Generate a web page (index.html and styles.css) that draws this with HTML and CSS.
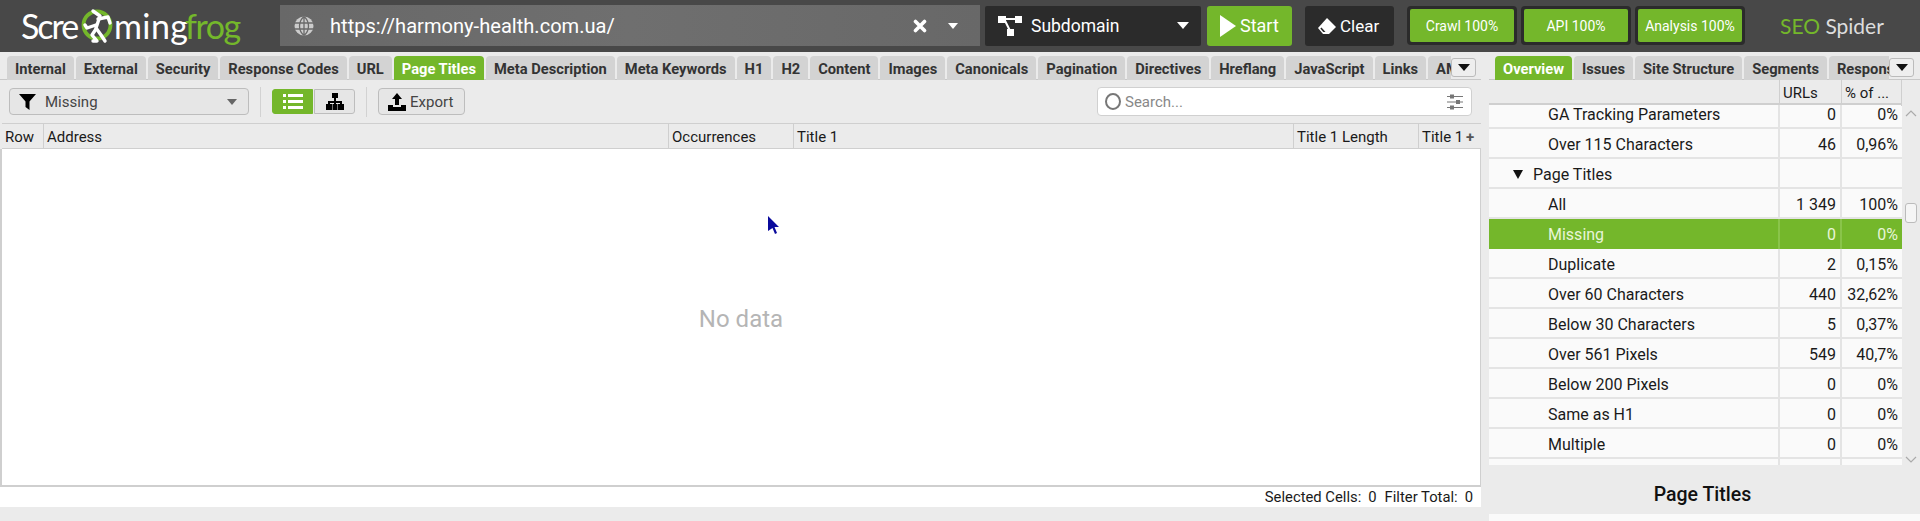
FILE: index.html
```html
<!doctype html>
<html lang="en">
  <head>
    <meta charset="UTF-8" />
    <title>Screaming Frog SEO Spider</title>
    <link rel="stylesheet" href="styles.css">
  </head>
  <body>
    <header class="topbar">
      <div class="logo">
        <span class="logo-scre">Scre</span>
        <svg class="logo-frog" width="36" height="36" viewBox="0 0 36 36">
          <circle cx="18" cy="17" r="13.500" fill="none" stroke="#74b72b" stroke-width="3.800" />
          <g fill="none" stroke="#fff" stroke-width="3.400" stroke-linejoin="round" stroke-linecap="round">
            <path d="M14 3l7 5-4 12 5 7 4 6" />
            <path d="M19 11l10-2 2 6" />
            <path d="M17 17l-9 3-2-3" />
            <path d="M17 21l-4 6 5 6h-4" />
          </g>
        </svg>
        <span class="logo-ming">ming</span><span class="logo-green">frog</span>
      </div>
      <div class="url-box">
        <svg width="20" height="20" viewBox="0 0 20 20" fill="none">
          <circle cx="10" cy="10" r="9.500" fill="#ccc" />
          <path stroke="#6a6a6a" stroke-width="1.300" d="M1 7h18M1 13h18M10 .5v19M10 .5c-6 5-6 14 0 19M10 .5c6 5 6 14 0 19" />
        </svg>
        <span class="url-text">https://harmony-health.com.ua/</span>
        <svg class="url-x" width="14" height="14" viewBox="0 0 14 14">
          <path d="M2.500 2.500l9 9M11.500 2.500l-9 9" stroke="#fff" stroke-width="3.600" stroke-linecap="round" />
        </svg>
        <span class="caret caret-url"></span>
      </div>
      <div class="mode-box">
        <svg width="24" height="22" viewBox="0 0 24 22" fill="#fff">
          <rect x="0" y="1" width="8" height="7" />
          <rect x="17" y="1" width="7" height="7" />
          <rect x="9" y="14" width="7" height="7" />
          <path d="M6 3h12v2H6zM6 6l1.800-1 5 10-1.800 1z" />
        </svg>
        <span class="mode-text">Subdomain</span>
        <span class="caret"></span>
      </div>
      <div class="start-btn"><span class="play"></span>Start</div>
      <div class="clear-btn">
        <svg width="20" height="18" viewBox="0 0 20 18">
          <path fill="#fff" d="M10 1l9 9-7 7H6l-5-6z" />
          <path fill="#2b2b2b" d="M4.500 10.500l4 4.500H6.300l-3-3.600z" />
        </svg>
        Clear
      </div>
      <div class="progress-group">
        <div class="progress"><span>Crawl 100%</span></div>
        <div class="progress"><span>API 100%</span></div>
        <div class="progress"><span>Analysis 100%</span></div>
      </div>
      <div class="brand"><span class="brand-seo">SEO</span> Spider</div>
    </header>

    <main class="content">
      <section class="left-panel">
        <nav class="tabs">
          <div class="tab-list">
            <div class="tab">Internal</div>
            <div class="tab">External</div>
            <div class="tab">Security</div>
            <div class="tab">Response Codes</div>
            <div class="tab">URL</div>
            <div class="tab active">Page Titles</div>
            <div class="tab">Meta Description</div>
            <div class="tab">Meta Keywords</div>
            <div class="tab">H1</div>
            <div class="tab">H2</div>
            <div class="tab">Content</div>
            <div class="tab">Images</div>
            <div class="tab">Canonicals</div>
            <div class="tab">Pagination</div>
            <div class="tab">Directives</div>
            <div class="tab">Hreflang</div>
            <div class="tab">JavaScript</div>
            <div class="tab">Links</div>
            <div class="tab">AMP</div>
          </div>
          <button class="tab-more"><span class="caret caret-dark"></span></button>
        </nav>

        <div class="toolbar">
          <div class="filter-select">
            <svg width="17" height="17" viewBox="0 0 17 17"><path d="M0 1h17l-6.500 7.500V17l-4-3V8.500z" /></svg>
            <span>Missing</span>
            <span class="caret caret-grey"></span>
          </div>
          <div class="sep"></div>
          <div class="view-toggle">
            <div class="view-btn on">
              <svg width="20" height="16" viewBox="0 0 20 16" fill="#fff">
                <path d="M0 0h3v3H0zM5 0h15v3H5zM0 6h3v3H0zM5 6h15v3H5zM0 12h3v3H0zM5 12h15v3H5z" />
              </svg>
            </div>
            <div class="view-btn">
              <svg width="18" height="17" viewBox="0 0 18 17">
                <path d="M6 0h6v5H6zM8 5h2v3h6v3h-2V10H10v1H8v-1H4v1H2V8h6zM0 11h6v6H0zM6.500 11h5v6h-5zM12 11h6v6h-6z" />
              </svg>
            </div>
          </div>
          <div class="sep"></div>
          <div class="export-btn">
            <svg width="18" height="18" viewBox="0 0 18 18">
              <path d="M9 0l5 6h-3v6H7V6H4zM0 12h5v2h8v-2h5v6H0z" />
            </svg>
            Export
          </div>
          <div class="search-box">
            <span class="search-ring"></span>
            <span class="search-text">Search...</span>
            <svg width="16" height="16" viewBox="0 0 16 16" fill="#777">
              <path d="M0 2h16v1H0zM0 7.500h16v1H0zM0 13h16v1H0z" />
              <path d="M3 .5h4v4H3zM9 6h4v4H9zM3 11.500h4v4H3z" />
            </svg>
          </div>
        </div>

        <div class="grid-head">
          <div class="col col-row">Row</div>
          <div class="col col-address">Address</div>
          <div class="col col-occ">Occurrences</div>
          <div class="col col-title">Title 1</div>
          <div class="col col-len">Title 1 Length</div>
          <div class="col col-title2">Title 1</div>
          <div class="col-plus">+</div>
        </div>
        <div class="grid-body">
          No data
          <svg class="pointer" width="13" height="19" viewBox="0 0 13 19">
            <path fill="#0a0a9c" d="M1 0l11 11H7.500l2.500 6-2 1-2.500-6L1 15z" />
          </svg>
        </div>
        <div class="grid-foot">
          <span>Selected Cells:</span><span>0</span>
          <span class="foot-gap">Filter Total:</span><span>0</span>
        </div>
      </section>

      <aside class="right-panel">
        <nav class="tabs tabs-right">
          <div class="tab-list">
            <div class="tab active">Overview</div>
            <div class="tab">Issues</div>
            <div class="tab">Site Structure</div>
            <div class="tab">Segments</div>
            <div class="tab">Response Codes</div>
          </div>
          <button class="tab-more"><span class="caret caret-dark"></span></button>
        </nav>

        <div class="tree-wrap">
          <div class="tree">
            <div class="tree-head">
              <div></div>
              <div>URLs</div>
              <div>% of ...</div>
            </div>
            <div class="tree-row clipped">
              <div class="name">GA Tracking Parameters</div><div class="num">0</div><div class="num">0%</div>
            </div>
            <div class="tree-row">
              <div class="name">Over 115 Characters</div><div class="num">46</div><div class="num">0,96%</div>
            </div>
            <div class="tree-row">
              <div class="name group"><span class="triangle"></span>Page Titles</div><div class="num"></div><div class="num"></div>
            </div>
            <div class="tree-row">
              <div class="name">All</div><div class="num">1 349</div><div class="num">100%</div>
            </div>
            <div class="tree-row selected">
              <div class="name">Missing</div><div class="num">0</div><div class="num">0%</div>
            </div>
            <div class="tree-row">
              <div class="name">Duplicate</div><div class="num">2</div><div class="num">0,15%</div>
            </div>
            <div class="tree-row">
              <div class="name">Over 60 Characters</div><div class="num">440</div><div class="num">32,62%</div>
            </div>
            <div class="tree-row">
              <div class="name">Below 30 Characters</div><div class="num">5</div><div class="num">0,37%</div>
            </div>
            <div class="tree-row">
              <div class="name">Over 561 Pixels</div><div class="num">549</div><div class="num">40,7%</div>
            </div>
            <div class="tree-row">
              <div class="name">Below 200 Pixels</div><div class="num">0</div><div class="num">0%</div>
            </div>
            <div class="tree-row">
              <div class="name">Same as H1</div><div class="num">0</div><div class="num">0%</div>
            </div>
            <div class="tree-row">
              <div class="name">Multiple</div><div class="num">0</div><div class="num">0%</div>
            </div>
            <div class="tree-row">
              <div class="name"></div><div class="num"></div><div class="num"></div>
            </div>
          </div>
          <div class="scrollbar">
            <svg class="arrow-up" width="12" height="7" viewBox="0 0 12 7"><path d="M1 6l5-5 5 5" fill="none" stroke="#aaa" stroke-width="1.200" /></svg>
            <div class="thumb"></div>
            <svg class="arrow-down" width="12" height="7" viewBox="0 0 12 7"><path d="M1 1l5 5 5-5" fill="none" stroke="#aaa" stroke-width="1.200" /></svg>
          </div>
        </div>

        <div class="detail-title">Page Titles</div>
        <div class="detail-body"></div>
      </aside>
    </main>
  </body>
</html>
```

FILE: styles.css
```css
* {
  box-sizing: border-box;
}
html,
body {
  margin: 0;
  height: 521px;
  overflow: hidden;
}
body {
  font-family: Roboto, Arial, sans-serif;
  background: #ebebeb;
  color: #1a1a1a;
}

/* top bar */
.topbar {
  display: flex;
  align-items: center;
  height: 52px;
  background: #484848;
  padding: 0 0 1px 21px;
}
.logo {
  display: flex;
  align-items: center;
  width: 259px;
  font-family: Lato, sans-serif;
  font-weight: 400;
  font-size: 34px;
  color: #fff;
}
.logo-scre {
  width: 58px;
  letter-spacing: -2px;
}
.logo-ming {
  width: 71px;
  letter-spacing: .4px;
}
.logo-green {
  color: #74b72b;
  letter-spacing: -1.400px;
}
.logo-frog {
  flex: none;
  margin-right: -1px;
}
.caret {
  display: inline-block;
  width: 0;
  height: 0;
  border-left: 6px solid transparent;
  border-right: 6px solid transparent;
  border-top: 7px solid #fff;
}
.caret-dark {
  border-top-color: #111;
}
.caret-grey {
  border-left-width: 5px;
  border-right-width: 5px;
  border-top: 6px solid #666;
  margin-left: auto;
}
.url-box {
  display: flex;
  align-items: center;
  width: 700px;
  height: 41px;
  padding: 0 22px 0 14px;
  background: linear-gradient(90deg, #686868, #6f6f6f 50%, #686868);
  color: #fff;
}
.url-text {
  font-size: 20.100px;
  margin-left: 16px;
}
.url-x {
  margin-left: auto;
}
.caret-url {
  margin-left: 21px;
  border-left-width: 5px;
  border-right-width: 5px;
  border-top-width: 6px;
}
.mode-box {
  display: flex;
  align-items: center;
  width: 216px;
  height: 40px;
  margin-left: 5px;
  padding: 0 12px 0 13px;
  background: #2b2b2b;
  border-radius: 2px;
  color: #fff;
  font-size: 17.500px;
}
.mode-text {
  margin-left: 9px;
}
.mode-box .caret {
  margin-left: auto;
}
.start-btn {
  display: flex;
  align-items: center;
  width: 85px;
  height: 40px;
  margin-left: 6px;
  padding-left: 13px;
  background: #74b72b;
  border-radius: 3px;
  color: #fff;
  font-size: 18px;
}
.play {
  width: 0;
  height: 0;
  border-top: 11px solid transparent;
  border-bottom: 11px solid transparent;
  border-left: 16px solid #fff;
  margin-right: 4px;
}
.clear-btn {
  display: flex;
  align-items: center;
  gap: 3px;
  width: 89px;
  height: 40px;
  margin-left: 13px;
  padding-left: 12px;
  background: #2b2b2b;
  border-radius: 3px;
  color: #fff;
  font-size: 17px;
}
.progress-group {
  display: flex;
  gap: 4px;
  margin-left: 13px;
}
.progress {
  width: 110px;
  height: 39px;
  padding: 3px;
  background: #2b2b2b;
  border-radius: 4px;
}
.progress span {
  display: flex;
  align-items: center;
  justify-content: center;
  height: 100%;
  background: #74b72b;
  border-radius: 2px;
  color: #fff;
  font-size: 14px;
}
.brand {
  margin-left: 35px;
  font-family: Lato, sans-serif;
  font-size: 21px;
  color: #ddd;
}
.brand-seo {
  color: #74b72b;
}

/* panels */
.content {
  display: flex;
  height: 469px;
}
.left-panel {
  width: 1481px;
  display: flex;
  flex-direction: column;
}
.right-panel {
  width: 431px;
  margin-left: 8px;
  display: flex;
  flex-direction: column;
}

/* tabs */
.tabs {
  position: relative;
  height: 28px;
  padding: 4px 30px 0 7px;
  border-bottom: 1px solid #c8c8c8;
}
.tabs-right {
  padding-left: 6px;
  padding-right: 31px;
}
.tab-list {
  display: flex;
  gap: 2px;
  overflow: hidden;
  white-space: nowrap;
}
.tab {
  flex: none;
  height: 24px;
  line-height: 27px;
  padding: 0 8px;
  background: #d3d3d3;
  border-radius: 4px 4px 0 0;
  font-size: 14.700px;
  font-weight: 700;
  color: #333;
}
.tab.active {
  background: #74b72b;
  color: #fff;
}
.tab-more {
  position: absolute;
  top: 6px;
  right: 5px;
  width: 25px;
  height: 19px;
  padding: 0;
  display: flex;
  align-items: center;
  justify-content: center;
  background: #eee;
  border: 1px solid #bbb;
  border-radius: 3px;
}
.tabs-right .tab-more {
  right: 6px;
}

/* toolbar */
.toolbar {
  display: flex;
  align-items: center;
  height: 43px;
  padding: 0 9px 0 9px;
}
.filter-select {
  display: flex;
  align-items: center;
  width: 240px;
  height: 27px;
  padding: 0 11px 0 9px;
  background: #e6e6e6;
  border: 1px solid #bdbdbd;
  border-radius: 4px;
  font-size: 15px;
  color: #444;
}
.filter-select span:first-of-type {
  margin-left: 9px;
}
.sep {
  width: 1px;
  height: 30px;
  margin: 0 11px;
  background: #d2d2d2;
}
.view-toggle {
  display: flex;
  gap: 1px;
}
.view-btn {
  display: flex;
  align-items: center;
  justify-content: center;
  width: 41px;
  height: 25px;
  background: #e6e6e6;
  border: 1px solid #bdbdbd;
  border-radius: 0 3px 3px 0;
}
.view-btn.on {
  background: #74b72b;
  border-color: #74b72b;
  border-radius: 3px 0 0 3px;
}
.export-btn {
  display: flex;
  align-items: center;
  gap: 4px;
  width: 87px;
  height: 27px;
  padding-left: 9px;
  background: #e6e6e6;
  border: 1px solid #bdbdbd;
  border-radius: 4px;
  font-size: 15px;
  color: #444;
}
.search-box {
  display: flex;
  align-items: center;
  width: 375px;
  height: 29px;
  margin-left: auto;
  padding: 0 8px 0 7px;
  background: #fff;
  border: 1px solid #d0d0d0;
  border-radius: 4px;
}
.search-ring {
  width: 16px;
  height: 17px;
  border: 2.500px solid #777;
  border-radius: 50%;
}
.search-text {
  margin-left: 4px;
  font-size: 15px;
  color: #888;
}
.search-box svg {
  margin-left: auto;
}

/* left table */
.grid-head {
  display: flex;
  height: 26px;
  margin-left: 2px;
  border-top: 1px solid #cfcfcf;
  border-bottom: 1px solid #cfcfcf;
  font-size: 15px;
  line-height: 27px;
}
.col {
  padding-left: 3px;
  border-right: 1px solid #cfcfcf;
  white-space: nowrap;
  overflow: hidden;
}
.col-row {
  width: 42px;
}
.col-address {
  width: 625px;
}
.col-occ {
  width: 125px;
}
.col-title {
  width: 500px;
}
.col-len {
  width: 125px;
}
.col-title2 {
  width: 42px;
  border-right: 0;
}
.col-plus {
  width: 18px;
  text-align: center;
  font-weight: 700;
  color: #555;
}
.grid-body {
  position: relative;
  flex: 1;
  display: flex;
  align-items: center;
  justify-content: center;
  background: #fff;
  border-left: 2px solid #cfcfcf;
  border-right: 1px solid #cfcfcf;
  border-bottom: 2px solid #cfcfcf;
  font-size: 24px;
  color: #b5b5b5;
  padding-top: 4px;
}
.pointer {
  position: absolute;
  left: 765px;
  top: 67px;
}
.grid-foot {
  display: flex;
  justify-content: flex-end;
  gap: 7px;
  height: 20px;
  margin-bottom: 14px;
  padding-right: 8px;
  background: #fff;
  font-size: 14.800px;
  line-height: 21px;
}
.foot-gap {
  margin-left: 1px;
}

/* right tree */
.tree-wrap {
  display: flex;
  height: 385px;
  overflow: hidden;
}
.tree {
  width: 413px;
}
.tree-head,
.tree-row {
  display: grid;
  grid-template-columns: 291px 62px 60px;
}
.tree-head {
  height: 25px;
  line-height: 26px;
  border-bottom: 2px solid #cfcfcf;
  font-size: 15px;
}
.tree-head div {
  padding-left: 3px;
  border-right: 1px solid #cfcfcf;
}
.tree-row {
  height: 30px;
  background: #fafafa;
  border-bottom: 2px solid #e4e4e4;
  line-height: 31px;
  font-size: 16px;
}
.tree-row.clipped {
  height: 24px;
  line-height: 20px;
}
.tree-row > div {
  border-right: 2px solid #e4e4e4;
  white-space: nowrap;
}
.tree-row > div:last-child {
  border-right: 0;
}
.name {
  padding-left: 59px;
}
.name.group {
  display: flex;
  align-items: center;
  padding-left: 24px;
}
.triangle {
  width: 0;
  height: 0;
  margin-right: 10px;
  border-left: 5px solid transparent;
  border-right: 5px solid transparent;
  border-top: 9px solid #111;
}
.num {
  padding-right: 4px;
  text-align: right;
}
.tree-row.selected {
  background: #74b72b;
  border-bottom-color: #74b72b;
  color: #e8f5d8;
}
.tree-row.selected > div {
  border-right-color: #8ac44a;
}
.tree-row.selected > div:last-child {
  border-right: 0;
}
.scrollbar {
  position: relative;
  width: 18px;
}
.arrow-up {
  position: absolute;
  top: 30px;
  left: 3px;
}
.thumb {
  position: absolute;
  top: 123px;
  left: 3px;
  width: 12px;
  height: 20px;
  background: #f5f5f5;
  border: 1px solid #bbb;
  border-radius: 3px;
}
.arrow-down {
  position: absolute;
  top: 376px;
  left: 3px;
}
.detail-title {
  height: 49px;
  line-height: 60px;
  text-align: center;
  font-size: 19.500px;
  font-weight: 500;
  color: #111;
  padding-right: 4px;
}
.detail-body {
  flex: 1;
  background: #fafafa;
}
```
